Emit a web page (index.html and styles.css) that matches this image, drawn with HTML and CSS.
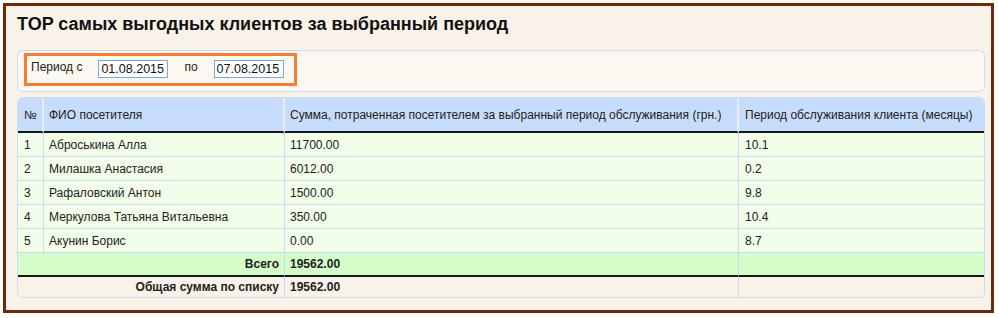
FILE: index.html
```html
<!DOCTYPE html>
<html lang="ru">
<head>
<meta charset="utf-8">
<title>TOP клиентов</title>
<link rel="stylesheet" href="styles.css">
</head>
<body>
<div class="frame">
  <h1 class="title">TOP самых выгодных клиентов за выбранный период</h1>
  <div class="panel">
    <div class="filter">
      <span class="lbl lbl-from">Период с</span>
      <input class="date date-from" type="text" value="01.08.2015">
      <span class="lbl lbl-to">по</span>
      <input class="date" type="text" value="07.08.2015">
    </div>
  </div>
  <div class="grid-wrap">
    <table class="grid">
      <thead>
        <tr>
          <th class="c-num">№</th>
          <th class="c-name">ФИО посетителя</th>
          <th class="c-sum">Сумма, потраченная посетителем за выбранный период обслуживания (грн.)</th>
          <th class="c-period">Период обслуживания клиента (месяцы)</th>
        </tr>
      </thead>
      <tbody>
        <tr class="row"><td>1</td><td>Аброськина Алла</td><td>11700.00</td><td class="last">10.1</td></tr>
        <tr class="row"><td>2</td><td>Милашка Анастасия</td><td>6012.00</td><td class="last">0.2</td></tr>
        <tr class="row"><td>3</td><td>Рафаловский Антон</td><td>1500.00</td><td class="last">9.8</td></tr>
        <tr class="row"><td>4</td><td>Меркулова Татьяна Витальевна</td><td>350.00</td><td class="last">10.4</td></tr>
        <tr class="row"><td>5</td><td>Акунин Борис</td><td>0.00</td><td class="last">8.7</td></tr>
        <tr class="total"><td class="r" colspan="2">Всего</td><td class="b">19562.00</td><td class="last"></td></tr>
        <tr class="grand"><td class="r" colspan="2">Общая сумма по списку</td><td class="b">19562.00</td><td class="last"></td></tr>
      </tbody>
    </table>
  </div>
</div>
</body>
</html>
```

FILE: styles.css
```css
html, body {
  margin: 0;
  padding: 0;
  background: #ffffff;
}

body {
  font-family: "Liberation Sans", Arial, sans-serif;
  color: #222;
}

.frame {
  box-sizing: border-box;
  margin: 3px 4px 0 3px;
  width: 991px;
  height: 310px;
  border: 3px solid #6b2a0b;
  background: #f8f2e8;
  padding: 8px 6px 0 11px;
}

.title {
  margin: 0 0 16px 0;
  font-size: 18px;
  line-height: 20px;
  font-weight: bold;
  color: #111;
}

.panel {
  box-sizing: border-box;
  width: 968px;
  border: 1px solid #cadcf6;
  border-radius: 6px;
  background: #fbf7f1;
  padding: 2px 6px 5px 6px;
}

.filter {
  box-sizing: border-box;
  width: 273px;
  height: 33px;
  border: 3px solid #f47f32;
  display: flex;
  align-items: flex-start;
  padding: 4px 0 0 4px;
}

.lbl {
  font-size: 12px;
  line-height: 14px;
  color: #222;
}

.lbl-from {
  margin-right: 16px;
}

.lbl-to {
  margin-left: 1px;
  margin-right: 16px;
}

.date {
  box-sizing: border-box;
  width: 70px;
  height: 18px;
  margin: 0;
  border: 1px solid #7ea6dd;
  padding: 0 2px;
  font-family: "Liberation Sans", Arial, sans-serif;
  font-size: 12.5px;
  color: #111;
  background: #fff;
  outline: none;
}

.date-from {
  margin-right: 15px;
}

.grid-wrap {
  box-sizing: border-box;
  width: 968px;
  margin-top: 5px;
  border: 1px solid #c9daf6;
  border-radius: 6px;
  overflow: hidden;
}

.grid {
  width: 966px;
  border-collapse: separate;
  border-spacing: 0;
  table-layout: fixed;
  font-size: 12px;
}

.grid th,
.grid td {
  box-sizing: border-box;
  padding: 0 5px;
  text-align: left;
  white-space: nowrap;
  overflow: hidden;
}

.grid th {
  height: 35px;
  background: #c7dcfb;
  font-weight: normal;
  color: #222;
  border-bottom: 2px solid #161616;
  border-right: 2px solid #e6eefc;
}

.grid th:first-child {
  padding-left: 6px;
}

.grid th.c-period {
  border-right: none;
  padding-left: 6px;
}

.c-num { width: 26px; }
.c-name { width: 241px; }
.c-sum { width: 454px; }

.grid td {
  border-right: 1px solid #c9daf6;
  border-bottom: 1px solid #c9daf6;
}

.grid td.last {
  border-right: none;
  padding-left: 6px;
}

.row td {
  height: 24px;
  background: #f1fde9;
}

.row td:first-child {
  padding-left: 6px;
}

.total td {
  height: 24px;
  background: #d4fdca;
  border-bottom: 2px solid #161616;
  font-weight: bold;
}

.grand td {
  height: 20px;
  border-bottom: none;
  background: #f8f2e8;
  font-weight: bold;
}

.grid td.r {
  text-align: right;
}
```
